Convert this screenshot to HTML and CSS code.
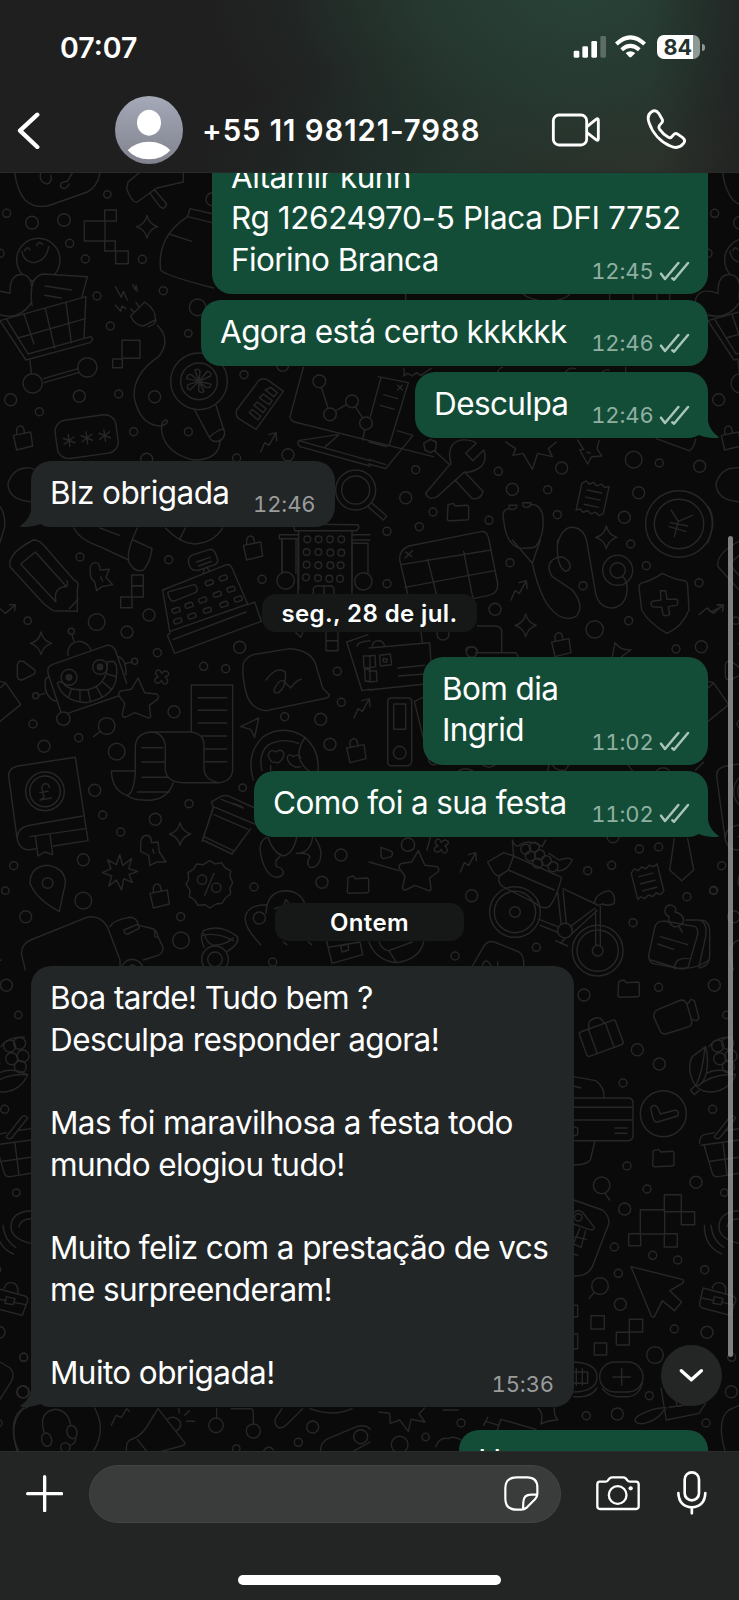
FILE: index.html
```html
<!DOCTYPE html>
<html lang="pt-BR">
<head>
<meta charset="utf-8">
<title>+55 11 98121-7988</title>
<link rel="stylesheet" href="styles.css">
</head>
<body>
<div class="phone">
  <header class="header">
    <div class="status">
      <span class="clock">07:07</span>
      <div class="status-icons">
        <svg class="i-signal" viewBox="97 45 101 72"><g fill="#fff"><rect x="99" y="92" width="17" height="21" rx="4"/><rect x="125" y="79" width="17" height="34" rx="4"/><rect x="152" y="63" width="17" height="50" rx="4"/><rect x="179" y="48" width="17" height="65" rx="4" opacity=".25"/></g></svg>
        <svg class="i-wifi" viewBox="226 45 94 72"><g fill="none" stroke="#fff" stroke-width="12"><path d="M230 72Q272 32 315 72"/><path d="M246 89Q272 66 299 89"/></g><path d="M258 99Q272 88 287 99L276 110Q272 114 268 110Z" fill="#fff"/></svg>
        <div class="battery"><span>84</span></div>
      </div>
    </div>
    <div class="nav">
      <svg class="i-back" viewBox="50 276 70 112"><path d="M111 284L59 332L111 381" fill="none" stroke="#fff" stroke-width="13" stroke-linecap="round" stroke-linejoin="round"/></svg>
      <svg class="avatar" viewBox="0 0 204 204"><defs><linearGradient id="av" x1="0" y1="0" x2="0" y2="1"><stop offset="0" stop-color="#a5a9b8"/><stop offset="1" stop-color="#80838d"/></linearGradient></defs><circle cx="102" cy="102" r="102" fill="url(#av)"/><ellipse cx="102" cy="80" rx="36" ry="39" fill="#fff"/><path d="M38 163Q62 137 102 137Q142 137 166 163Q142 190 102 190Q62 190 38 163Z" fill="#fff"/></svg>
      <h1 class="title">+55 11 98121-7988</h1>
      <svg class="i-video" viewBox="34 277 150 102"><g fill="none" stroke="#fff" stroke-width="8.5" stroke-linejoin="round"><rect x="41" y="283" width="100" height="90" rx="17"/><path d="M142 318L169 296Q176 291 176 299V354Q176 362 169 357L142 336"/></g></svg>
      <svg class="i-phone" viewBox="320 266 122 122"><path d="M336 275C345 269 353 272 358 279L368 296C372 303 369 307 364 311C358 316 357 321 361 327C368 337 378 346 387 351C393 354 397 351 401 345C405 339 410 338 416 342L430 352C437 358 437 364 432 370C423 381 408 384 393 377C363 364 339 337 329 307C324 292 327 281 336 275Z" fill="none" stroke="#fff" stroke-width="8.5" stroke-linejoin="round"/></svg>
    </div>
  </header>

  <main class="chat">
    <svg class="wallpaper" viewBox="0 173 739 1278">
      <defs>
        <symbol id="lock" viewBox="0 0 70 80" overflow="visible"><path d="M6 30L58 20L64 62L16 74ZM16 27V12Q22 -4 36 6L40 23"/></symbol>
        <path id="spark" d="M0 -34Q6 -8 32 0Q8 6 0 34Q-6 8 -32 0Q-6 -6 0 -34Z"/>
        <path id="arrow" d="M0 60L12 32L25 40L45 4M24 8L46 2L48 26"/>
        <path id="burst" d="M0 -52L9 -20L36 -40L27 -10L54 -2L28 8L38 32L12 20L6 54L-10 24L-32 42L-24 12L-52 2L-26 -10L-36 -36L-10 -22Z"/>
        <path id="star" d="M4 -60L24 -16L60 -12Q70 -6 62 4L38 22L42 56Q38 64 26 56L-6 44L-34 58Q-46 58 -42 44L-36 16L-54 -8Q-54 -22 -42 -22L-16 -26Z"/>
        <path id="clover" d="M0 -10Q10 -24 20 -14Q24 -4 10 0Q24 10 14 20Q4 24 0 10Q-10 24 -20 14Q-24 4 -10 0Q-24 -10 -14 -20Q-4 -24 0 -10Z"/>
        <g id="receipt"><path d="M-42 -36L-30 -46L-20 -38L-8 -46L4 -38L16 -46L28 -38L40 -44L40 40L28 48L16 40L4 48L-8 40L-20 48L-32 40L-42 46ZM-22 -20H22M-22 2H22M-22 24H22"/></g>
        <path id="folder" d="M-30 -22L-14 -26L-8 -18L26 -20Q32 -20 32 -14V18Q32 24 26 24L-26 26Q-32 26 -32 20Z"/>

        <g id="wa">
          <path d="M42 0Q42 80 75 120Q110 152 160 132L262 96Q302 76 302 10M122 40Q116 66 140 72Q158 68 152 46M208 72Q196 94 182 80Q178 66 202 64L222 30"/>
          <path d="M384 66L440 20L550 -10V66L470 84L412 126Q396 130 380 86ZM450 100L480 140Q494 152 500 132L462 88"/>
          <rect x="314" y="150" width="35" height="33"/><rect x="253" y="183" width="62" height="60"/><rect x="314" y="243" width="32" height="30"/><rect x="347" y="273" width="38" height="38"/>
          <use href="#spark" x="441" y="200"/>
          <path d="M640 162L570 146L563 170L636 188M563 170Q470 230 482 330Q490 345 640 384M508 222L575 244"/>
          <circle cx="115" cy="300" r="65"/><path d="M66 274Q70 306 104 308Q140 300 146 260M74 272Q82 256 90 270M110 256Q118 240 128 254"/>
          <path fill="#0a0a0a" d="M-40 440Q-40 376 30 400Q28 340 70 344Q100 350 94 400M0 465Q60 480 92 430M96 436Q84 350 130 342L262 350L246 412M135 378L214 390M134 406L184 414"/>
          <path d="M0 482L258 410L252 532M0 482L78 600L270 548Q284 538 272 530L84 582L20 478M54 534L256 476M72 462L102 552M136 446L164 564M198 428L214 548M90 602L94 640M130 656L234 626M132 668L236 638"/><circle cx="98" cy="670" r="29"/><circle cx="262" cy="622" r="29"/>
          <path d="M346 380L364 412L370 394L382 420M398 374L406 390L408 376L412 394M346 436L362 454L366 438L378 446"/>
          <path d="M392 468L434 426Q470 450 466 480L430 498Q404 496 392 468ZM418 442L408 428M402 456L392 446M466 474Q474 490 446 500M472 496Q516 540 476 590Q400 640 402 710Q420 800 486 798Q510 786 500 780Q480 780 486 820Q500 880 580 900Q660 900 660 840"/>
          <rect x="366" y="541" width="54" height="54"/><rect x="338" y="597" width="29" height="26"/>
          <circle cx="597" cy="664" r="85"/><circle cx="597" cy="664" r="55"/><path d="M597 664L585 630Q596 624 600 634L597 664L622 634Q636 636 632 648L597 664L632 672Q634 686 618 682L597 664L612 694Q600 702 596 690L597 664L570 690Q558 684 564 674L597 664L560 656Q562 640 574 644ZM584 750L628 832Q640 852 664 840Q680 824 670 806L648 736M628 832Q648 812 672 806"/>
          <path d="M710 750L776 662Q790 650 806 662L850 694L768 808L716 776Q706 768 710 750ZM796 690L822 710L832 698L812 682ZM778 714L808 734L816 722L790 702ZM762 736L790 758L798 746L772 726ZM748 758L774 780L782 768L756 748Z"/>
          <use href="#arrow" x="782" y="816"/>
          <path d="M910 622L870 770Q872 782 884 786L1300 890M958 664L990 762L1056 724L1098 790L1088 840M1015 826L976 860M896 842L1110 902M900 860Q890 850 896 842L1012 824M900 860L1110 918"/><circle cx="958" cy="664" r="19" fill="#0a0a0a"/><circle cx="990" cy="763" r="19" fill="#0a0a0a"/><circle cx="1056" cy="724" r="19" fill="#0a0a0a"/><circle cx="1098" cy="790" r="19" fill="#0a0a0a"/>
          <g transform="rotate(-8 260 830)"><rect x="168" y="772" width="184" height="116" rx="34"/><path d="M206 816V852M190 825L222 843M222 825L190 843M260 816V852M244 825L276 843M276 825L244 843M314 816V852M298 825L330 843M330 825L298 843"/></g>
          <use href="#lock" x="34" y="796" width="70" height="80"/>
          <path d="M92 1025Q24 1020 24 970Q40 924 80 924Q92 920 104 930M0 1040Q16 1060 14 1100L0 1148"/>
          <circle cx="1067" cy="990" r="60"/><circle cx="1067" cy="990" r="42"/><path d="M1104 1040L1150 1080L1160 1068L1114 1028"/>
          <path d="M222 1104Q240 1140 300 1160L386 1200Q380 1170 412 1104M300 1104L358 1126M400 1140L456 1166Q450 1210 430 1230Q400 1240 384 1200M496 1104Q540 1150 582 1152Q640 1150 668 1104M556 1104L540 1136"/>
          <path d="M880 1092L884 1112H1070Q1080 1104 1074 1094L890 1092M896 1116V1290M1056 1116V1290M838 1124H896M838 1124V1136H896M1056 1124H1110M1056 1140H1110M846 1136V1240M888 1136V1240"/>
          <g><circle cx="20" cy="160" r="12"/><circle cx="96" cy="188" r="19"/><circle cx="192" cy="180" r="19"/><circle cx="322" cy="103" r="11"/><circle cx="209" cy="250" r="12"/><circle cx="256" cy="297" r="12"/><circle cx="427" cy="298" r="12"/><circle cx="490" cy="392" r="12"/><circle cx="291" cy="408" r="12"/><circle cx="331" cy="498" r="12"/><circle cx="593" cy="442" r="25"/><circle cx="565" cy="520" r="11"/><circle cx="638" cy="118" r="20"/><circle cx="32" cy="719" r="18"/><circle cx="118" cy="755" r="12"/><circle cx="238" cy="709" r="18"/><circle cx="356" cy="702" r="12"/><circle cx="464" cy="710" r="18"/><circle cx="401" cy="815" r="12"/><circle cx="565" cy="815" r="12"/><circle cx="440" cy="898" r="18"/><circle cx="732" cy="644" r="12"/><circle cx="864" cy="884" r="18"/><circle cx="710" cy="894" r="12"/><circle cx="848" cy="616" r="18"/><circle cx="0" cy="280" r="12"/></g>
        </g>

        <g id="wb">
          <path d="M28 650L118 668L62 852Q58 862 46 858L0 846M36 652L4 770M44 704L86 716M34 736L76 748M86 676L100 690M100 676L86 690M84 812L132 826L50 926L0 912M0 898L50 914"/>
          <path d="M104 626Q108 644 104 648L116 640L130 648L142 638L156 646L170 636L186 626M110 400V420M460 400Q480 420 530 425Q590 420 604 400M722 404V420M792 404V420M864 404V420M902 404V420M386 636Q390 624 400 622M590 636Q600 620 620 626M700 636Q710 626 720 630M770 622V636"/>
          <path d="M164 850L184 838L202 846L200 870L184 878L168 870ZM198 874L242 914M246 912Q230 850 276 840Q310 838 322 850L290 880L312 902L344 870Q356 900 336 920Q310 940 286 936L204 1010Q180 1024 170 1000L242 914M258 960L310 1016Q336 1020 342 994L290 940"/>
          <path d="M410 846L440 866L432 886L462 880L490 928L506 880L550 890L538 866L562 846M626 840L644 868L632 870L656 912L668 890L698 888L684 866L690 842M654 876L664 880M862 836L960 872Q972 870 980 838"/>
          <use href="#receipt" transform="translate(672 1014) rotate(12)"/>
          <use href="#folder" x="267" y="1056"/>
          <circle cx="930" cy="1092" r="100"/><circle cx="930" cy="1092" r="74"/><path d="M906 1050L928 1084L970 1066M928 1084L916 1130M904 1088L956 1098M900 1100L950 1114"/>
          <use href="#spark" x="712" y="1132"/>
          <path d="M420 1046Q396 1050 404 1080Q410 1150 450 1164Q490 1166 500 1160Q530 1120 520 1060Q508 1030 486 1034M420 1036L444 1036Q444 1046 432 1048Q418 1050 420 1036ZM462 1028L486 1028Q486 1040 474 1042Q460 1044 462 1028ZM566 1150Q580 1102 610 1102Q650 1104 656 1160L680 1300Q690 1344 732 1344Q772 1336 774 1290Q776 1260 760 1250"/>
          <g><circle cx="140" cy="929" r="12"/><circle cx="388" cy="934" r="12"/><circle cx="578" cy="924" r="18"/><circle cx="430" cy="988" r="18"/><circle cx="536" cy="989" r="12"/><circle cx="794" cy="899" r="25"/><circle cx="871" cy="909" r="12"/><circle cx="992" cy="919" r="18"/><circle cx="809" cy="998" r="18"/><circle cx="766" cy="1072" r="18"/><circle cx="565" cy="1064" r="12"/><circle cx="192" cy="1056" r="12"/><circle cx="110" cy="1013" r="18"/><circle cx="54" cy="1114" r="12"/><circle cx="151" cy="1100" r="12"/><circle cx="360" cy="1081" r="12"/></g>
        </g>

        <g id="wc">
          <path d="M30 80Q22 40 100 0Q116 0 130 14L222 120Q240 124 232 150V214L160 212Q140 200 130 190L30 80ZM62 72L168 186M106 36L200 140M62 72L106 36M168 186Q160 150 186 142Q210 140 200 122M208 206L234 178"/>
          <path d="M270 90Q270 72 284 68Q300 66 300 90L328 88L318 112L338 134L306 140L290 152L284 126L272 112ZM302 110L308 124"/>
          <rect x="395" y="105" width="35" height="32"/><rect x="395" y="137" width="35" height="34"/><rect x="362" y="171" width="34" height="32"/>
          <path d="M0 206L16 220L44 196M28 194L46 194L44 212"/>
          <path d="M488 150L680 74Q690 72 696 84L744 194L764 186L784 244L524 340L502 286L510 280L488 150ZM510 274L744 192M520 298L738 216M566 70Q562 50 580 44L630 28Q642 28 648 44L654 62Q650 74 638 76L598 90Q572 96 566 70ZM590 66L630 52M596 78L634 64M612 88L610 98M620 82L628 92M504 162Q502 156 510 154L582 134Q590 134 592 150Q590 158 580 160L520 184Q510 184 504 162Z"/>
          <g><rect x="-12" y="-7" width="24" height="14" rx="6" transform="translate(528 211) rotate(-18)"/><rect x="-12" y="-7" width="24" height="14" rx="6" transform="translate(567 196) rotate(-18)"/><rect x="-12" y="-7" width="24" height="14" rx="6" transform="translate(608 180) rotate(-18)"/><rect x="-12" y="-7" width="24" height="14" rx="6" transform="translate(652 163) rotate(-18)"/><rect x="-12" y="-7" width="24" height="14" rx="6" transform="translate(693 148) rotate(-18)"/><rect x="-12" y="-7" width="24" height="14" rx="6" transform="translate(533 243) rotate(-18)"/><rect x="-12" y="-7" width="24" height="14" rx="6" transform="translate(576 228) rotate(-18)"/><rect x="-12" y="-7" width="24" height="14" rx="6" transform="translate(622 211) rotate(-18)"/><rect x="-12" y="-7" width="24" height="14" rx="6" transform="translate(672 193) rotate(-18)"/><rect x="-12" y="-7" width="24" height="14" rx="6" transform="translate(715 177) rotate(-18)"/><rect x="-12" y="-7" width="24" height="14" rx="6" transform="translate(628 128) rotate(-18)"/><rect x="-12" y="-7" width="24" height="14" rx="6" transform="translate(670 114) rotate(-18)"/></g>
          <use href="#lock" x="724" y="-14" width="70" height="80"/>
          <circle cx="857" cy="122" r="26"/><circle cx="1090" cy="124" r="26"/><path d="M846 0V98M894 0V162M1056 0V162M1104 10V100M1056 10H1104M940 162V146Q944 138 952 138H996L1002 146V162M972 138V162"/>
          <g><circle cx="922" cy="-2" r="10"/><circle cx="956" cy="-2" r="10"/><circle cx="990" cy="-2" r="10"/><circle cx="1024" cy="-2" r="10"/><circle cx="920" cy="36" r="10"/><circle cx="955" cy="36" r="10"/><circle cx="991" cy="38" r="10"/><circle cx="1024" cy="38" r="10"/><circle cx="920" cy="74" r="10"/><circle cx="955" cy="76" r="10"/><circle cx="991" cy="76" r="10"/><circle cx="1022" cy="76" r="10"/><circle cx="918" cy="112" r="10"/><circle cx="954" cy="114" r="10"/><circle cx="988" cy="116" r="10"/><circle cx="1020" cy="116" r="10"/></g>
          <use href="#spark" x="123" y="310"/>
          <path d="M52 376Q54 360 70 364L102 388Q110 396 100 404L66 420Q54 420 52 410Z"/>
          <path d="M204 346Q200 310 236 304Q262 306 272 328M144 400Q140 380 156 374L320 316Q336 314 346 330L380 430M144 400L184 520L192 524L372 462M172 430Q190 486 260 488Q350 470 350 400Q352 370 340 364L322 366Q324 440 256 450Q204 450 192 432Q176 420 172 430ZM206 470L214 448M240 486V452M272 486L264 450M306 470L290 442M332 446L308 426M348 410L322 402M136 420Q140 410 146 412M136 420Q130 470 168 484M134 460L116 466M356 350Q380 360 378 404M378 370L396 366M222 304L216 284"/><circle cx="207" cy="412" r="24"/><circle cx="207" cy="412" r="8" fill="#242424"/><circle cx="300" cy="381" r="22"/><circle cx="300" cy="381" r="8" fill="#242424"/><circle cx="214" cy="274" r="9"/><circle cx="404" cy="364" r="9"/><circle cx="107" cy="467" r="9"/><circle cx="190" cy="536" r="20" fill="#0a0a0a"/>
          <use href="#star" x="410" y="474" fill="#0a0a0a"/><use href="#clover" x="485" y="411"/>
          <path d="M0 424L16 428L62 494L0 544M0 444L16 430"/>
          <circle cx="320" cy="558" r="25"/><path d="M302 574L280 590"/>
          <path d="M574 576V435H698V690Q694 726 654 728H550Q500 726 496 690V616Q490 578 452 576Q408 580 406 620V700Q400 764 380 766Q336 750 334 693H404M452 576H572Q612 580 612 616V690Q616 720 654 728M380 766Q400 780 430 780Q500 786 520 728M594 473H680M594 511H680M594 549H680M606 588H680M612 627H680M612 665H680M426 623H488M426 666H492M426 712H502M412 756H508"/>
          <path d="M730 370Q740 350 760 344L870 326Q930 330 946 370L968 444L988 464Q988 470 980 474L800 512Q760 510 742 470Q724 410 730 370ZM798 420Q830 376 856 396Q860 440 836 458Q820 462 822 450Q834 420 850 422Q862 434 872 444Q890 420 904 418M888 278L902 292L908 278"/>
          <path d="M722 560L776 534L764 592L752 568Z"/>
          <path d="M978 278V332H1014V278M978 302H1014M1040 306L1104 284M1040 306L1086 452L1110 448M1072 318Q1070 306 1110 302M1090 348H1110V384H1092ZM1094 388H1110V424H1096Z"/>
          <path d="M760 720Q736 640 790 590Q850 552 912 590Q960 630 954 692M786 692Q774 640 806 614Q850 592 896 610M914 594Q890 630 900 660Q916 690 928 692M806 640Q812 626 828 636Q842 624 852 640Q852 656 836 668L816 666Q802 650 806 640ZM862 650Q870 640 880 650Q894 640 902 652M862 650Q860 670 888 682L902 680M812 676V692"/>
          <use href="#lock" x="1034" y="594" width="70" height="80"/><use href="#arrow" x="1062" y="474"/>
          <path d="M26 710Q24 684 54 678L226 652L264 902L160 918M108 926L86 930Q60 928 52 900L26 710M52 900Q50 862 90 856L248 828M90 890L256 866M106 888L114 948L134 936L158 944L150 884"/><circle cx="135" cy="754" r="58"/><circle cx="135" cy="754" r="46"/><path d="M148 742Q146 728 132 732Q122 738 128 754L132 772L120 780L154 774M120 758L144 754"/>
          <path d="M634 786L666 768Q676 764 690 770L764 804M634 786L640 800L764 852M640 800L608 900L696 942L752 866M642 824L744 868M612 890L700 932M664 778L730 804M606 904L640 804M700 790L726 800"/>
          <use href="#spark" x="540" y="882"/><path d="M422 908Q424 888 440 886Q456 888 454 908L474 906L478 936L498 966L470 966L450 976L446 946L422 934ZM458 928L462 940"/>
          <use href="#burst" x="359" y="996"/>
          <path d="M178 1114Q110 1080 90 1030Q90 980 142 976Q196 984 196 1030Z"/><circle cx="143" cy="1029" r="16"/>
          <use href="#lock" x="444" y="1030" width="70" height="80"/>
          <path d="M628 962L646 972L664 968L676 984L692 992L690 1010L698 1028L690 1044L692 1062L676 1074L666 1090L648 1092L630 1104L614 1094L594 1096L584 1080L568 1070L570 1050L558 1034L566 1018L564 998L580 988L590 972L610 974ZM642 1000L614 1066"/><circle cx="606" cy="1019" r="14"/><circle cx="649" cy="1043" r="14"/>
          <path d="M780 930Q780 900 800 892M780 930Q790 1000 826 1012Q850 1012 850 996Q848 984 830 980Q820 964 840 950M804 892Q820 940 850 948Q880 940 890 892M890 940Q930 940 938 892M946 896Q970 930 960 960Q950 986 930 982Q916 970 930 950Q924 938 900 940"/>
          <path d="M782 1214Q730 1160 736 1130Q744 1094 800 1094M860 1214L850 1206M935 1214L925 1206M798 1120Q800 1052 860 1052Q900 1054 914 1090M824 1106L850 1098L858 1078L868 1092M980 1204L996 1270L1088 1244L1080 1206M986 1222L1080 1206M1022 1218L1044 1212L1046 1230L1026 1236Z"/><circle cx="778" cy="1134" r="18"/><use href="#folder" x="1074" y="1034"/>
          <path d="M64 1240Q66 1210 92 1200L260 1132Q300 1124 322 1160L360 1260V1290M64 1240L76 1290M330 1160Q340 1140 390 1132Q410 1132 416 1156L450 1164Q470 1166 474 1190L490 1224Q488 1240 474 1246L430 1260M372 1170L410 1154Q420 1156 416 1166L384 1182Q372 1184 372 1170ZM362 1290Q370 1258 398 1258Q426 1262 430 1290M384 1290Q390 1272 404 1276L412 1290M464 1174V1190L474 1192"/>
          <path d="M612 1222Q598 1190 610 1172Q660 1150 712 1190Q720 1210 682 1234M612 1180Q620 1210 640 1216Q680 1214 700 1194M610 1186Q650 1176 700 1202"/><circle cx="645" cy="1258" r="40"/><circle cx="645" cy="1258" r="22"/>
          <g><circle cx="240" cy="51" r="12"/><circle cx="506" cy="59" r="12"/><circle cx="786" cy="118" r="12"/><circle cx="83" cy="242" r="11"/><circle cx="290" cy="246" r="25"/><circle cx="447" cy="225" r="18"/><circle cx="381" cy="276" r="18"/><circle cx="472" cy="338" r="12"/><circle cx="611" cy="379" r="12"/><circle cx="677" cy="386" r="12"/><circle cx="719" cy="322" r="18"/><circle cx="522" cy="515" r="18"/><circle cx="1012" cy="394" r="12"/><circle cx="1024" cy="487" r="12"/><circle cx="854" cy="530" r="12"/><circle cx="962" cy="538" r="18"/><circle cx="990" cy="613" r="18"/><circle cx="99" cy="552" r="12"/><circle cx="236" cy="593" r="12"/><circle cx="132" cy="619" r="18"/><circle cx="350" cy="635" r="25"/><circle cx="284" cy="751" r="18"/><circle cx="308" cy="825" r="12"/><circle cx="466" cy="838" r="18"/><circle cx="567" cy="791" r="12"/><circle cx="728" cy="743" r="11"/><circle cx="362" cy="876" r="12"/><circle cx="250" cy="959" r="18"/><circle cx="41" cy="977" r="12"/><circle cx="16" cy="1052" r="11"/><circle cx="250" cy="1082" r="25"/><circle cx="77" cy="1130" r="18"/><circle cx="542" cy="1130" r="12"/><circle cx="543" cy="1201" r="25"/><circle cx="762" cy="1041" r="12"/><circle cx="966" cy="1027" r="18"/><circle cx="1023" cy="945" r="18"/><circle cx="818" cy="1266" r="12"/></g>
        </g>

        <g id="wd">
          <path d="M116 162L92 60Q90 30 120 18L340 -26Q356 -24 360 0L386 130Q388 160 360 166L312 176M96 74L366 30M108 142L376 92M176 58L202 162M284 34L312 176M110 36L128 50M130 32L108 54"/>
          <use href="#arrow" x="426" y="120"/><use href="#spark" x="470" y="256"/>
          <path d="M430 0L490 70L514 0M490 70Q510 160 540 200Q580 250 620 230Q650 200 610 150L550 110Q530 80 550 60Q580 40 600 66Q610 90 590 94Q560 80 566 0"/>
          <circle cx="746" cy="91" r="45"/><circle cx="746" cy="91" r="23"/>
          <path d="M880 100Q920 120 946 122Q956 124 956 140L960 210Q940 260 894 280Q840 250 818 210L810 142Q810 130 822 128Q850 120 880 100ZM874 152H890L894 178L924 178Q930 190 922 196L898 200L902 224Q890 230 882 224L878 202L850 200Q842 190 850 184L876 180Z"/>
          <path d="M990 224L1014 204L1026 216L1062 198M1046 196L1064 196L1060 214"/>
          <use href="#lock" x="542" y="276" width="70" height="80"/>
          <path d="M730 350L738 308Q754 332 786 330L758 350M156 278L160 308M0 324L182 308L190 430L0 450M86 384L166 376M88 408L166 402M10 318Q10 302 30 302Q44 304 46 316M32 346L64 342L68 374L34 378ZM0 348L18 346L20 380L0 384M0 394L22 392L24 424L0 426M42 356H54V366H44ZM326 258H380Q398 260 398 274V336M320 338H440L448 350M290 330Q292 320 306 320Q320 320 326 332"/>
          <path d="M64 474H120Q128 476 128 484V664Q126 676 118 677H66Q56 676 56 666V484Q56 476 64 474ZM74 492H110V568H74ZM136 484L162 472M136 484L180 664Q184 676 200 674"/><circle cx="92" cy="638" r="19"/>
          <path d="M270 692Q290 680 310 692M340 673Q360 690 380 673M540 673L536 692M550 673Q560 696 590 690L600 673M776 673L790 692M862 692Q880 676 900 690M980 690L1004 666"/>
          <path d="M36 922L68 934Q74 942 66 950L44 956Q36 954 36 944ZM0 966L90 992M184 892L174 930"/><use href="#clover" x="217" y="918"/><use href="#star" x="144" y="992"/><use href="#arrow" x="274" y="936"/>
          <path d="M356 966L404 938L434 948L418 990L388 1008Q376 1008 356 966ZM434 948L578 1012Q560 1080 540 1100Q520 1110 500 1090L402 1040Q384 1030 392 1008L418 990L556 1050M430 900Q440 930 460 910Q490 900 520 920L530 900M430 900L434 948M540 940L570 960Q600 950 610 960Q590 1000 560 990"/>
          <g><circle cx="470" cy="928" r="15"/><circle cx="496" cy="922" r="15"/><circle cx="484" cy="948" r="15"/><circle cx="512" cy="944" r="15"/><circle cx="532" cy="962" r="15"/><circle cx="506" cy="970" r="15"/><circle cx="552" cy="980" r="15"/></g>
          <circle cx="438" cy="1116" r="76"/><circle cx="438" cy="1116" r="62"/><circle cx="438" cy="1116" r="16"/><circle cx="686" cy="1232" r="76"/><circle cx="686" cy="1232" r="62"/><circle cx="686" cy="1232" r="16"/><circle cx="588" cy="1172" r="22"/><path d="M510 1138L566 1160M514 1156L564 1176M566 1056L576 1150M582 1052L592 1150M582 1046L680 1092M678 1104L604 1160M610 1180L684 1112M680 1216V1110M694 1216V1100M676 1090Q680 1060 720 1052Q740 1060 736 1090Q720 1100 700 1092Q686 1100 676 1090ZM588 1196L574 1210M560 1202L596 1218"/>
          <path d="M310 1278L344 1220Q356 1200 376 1206L450 1236Q466 1246 464 1278M340 1276Q350 1250 366 1276M386 1266V1276M0 1206Q20 1260 80 1268Q150 1260 164 1206M30 1206Q40 1230 60 1232L130 1206M60 1232L80 1264"/>
          <use href="#receipt" transform="translate(836 1024) rotate(-14)"/>
          <path d="M916 896L902 990L938 1022L974 990L956 896"/>
          <path d="M858 1160Q864 1140 890 1144L980 1160Q990 1170 984 1190L958 1280Q950 1290 930 1286L850 1270Q836 1260 840 1240ZM950 1140H990Q1016 1146 1010 1190L990 1280M1000 1140Q1024 1146 1022 1180V1250Q1020 1280 990 1284M874 1190L956 1214M866 1212L914 1228M916 1286Q918 1250 960 1256M888 1110Q890 1092 910 1096Q926 1104 918 1116Q940 1120 944 1140Q940 1162 914 1160Q896 1150 900 1130Q886 1124 888 1110ZM930 1160L940 1176"/>
          <g><circle cx="54" cy="131" r="12"/><circle cx="423" cy="68" r="12"/><circle cx="642" cy="137" r="12"/><circle cx="832" cy="77" r="12"/><circle cx="785" cy="12" r="12"/><circle cx="990" cy="128" r="12"/><circle cx="378" cy="208" r="18"/><circle cx="677" cy="268" r="26"/><circle cx="779" cy="242" r="12"/><circle cx="921" cy="327" r="12"/><circle cx="997" cy="320" r="18"/><circle cx="308" cy="336" r="16"/><circle cx="222" cy="282" r="18"/><circle cx="117" cy="914" r="20"/><circle cx="308" cy="1067" r="18"/><circle cx="656" cy="992" r="12"/><circle cx="728" cy="976" r="12"/><circle cx="811" cy="927" r="12"/><circle cx="869" cy="921" r="12"/><circle cx="732" cy="890" r="18"/><circle cx="1034" cy="1051" r="12"/><circle cx="954" cy="1070" r="12"/><circle cx="792" cy="1148" r="12"/><circle cx="502" cy="1222" r="12"/><circle cx="258" cy="1248" r="12"/></g>
        </g>

        <g id="we">
          <path d="M845 0L924 24Q980 30 1020 0"/>
          <use href="#folder" x="779" y="86"/><use href="#folder" x="883" y="594"/>
          <g transform="rotate(-20 695 230)"><rect x="637" y="196" width="116" height="78" rx="8"/><path d="M668 196V274M722 196V274M672 196Q670 172 695 172Q718 172 718 196"/></g>
          <path d="M854 170Q854 154 868 148L936 120Q950 120 954 134L968 180Q970 196 960 200L890 222Q876 222 872 210ZM954 134L966 118L976 122L990 174L984 182L966 178"/>
          <path d="M980 378Q950 330 970 290L1010 260Q1020 300 1012 340Q1000 380 980 378ZM1012 340Q1050 320 1100 344Q1080 390 1030 396Q1000 396 988 384M980 376L964 390L976 404L990 392M980 378Q1000 340 1008 262M984 380Q1030 340 1098 344M1020 260Q1040 230 1090 232"/>
          <g><circle cx="1046" cy="258" r="18"/><circle cx="1076" cy="250" r="18"/><circle cx="1052" cy="296" r="18"/><circle cx="1086" cy="288" r="18"/><circle cx="1078" cy="320" r="18"/></g>
          <path d="M614 350L680 362Q706 380 706 414M614 378L636 384M614 414H780Q792 416 792 428V530Q790 540 780 542H614M614 442H792M614 480H792M738 504H774M738 520H774M614 500L626 504V524L614 528M678 542L664 600Q650 616 614 614"/>
          <circle cx="883" cy="461" r="69"/><path d="M848 440Q858 432 866 442L874 462L920 450Q932 454 926 468L866 486Q856 488 852 474L846 452Q844 444 848 440Z"/>
          <path d="M992 550Q990 530 1006 524L1036 518M1070 512L1110 506M996 556L1110 540M1006 558L1030 640Q1034 652 1048 650L1110 640M1024 604L1110 592M1062 550L1074 646M1036 530L1080 474Q1090 460 1100 474L1052 534Q1040 540 1036 530Z"/>
          <circle cx="698" cy="676" r="25"/><path d="M708 700L722 720"/><circle cx="693" cy="978" r="25"/><path d="M676 996L660 1016"/>
          <rect x="886" y="704" width="51" height="51"/><rect x="937" y="755" width="40" height="39"/><rect x="814" y="749" width="73" height="73"/><rect x="779" y="821" width="36" height="36"/><rect x="886" y="821" width="39" height="40"/>
          <path d="M614 720L700 750Q720 764 720 790L670 920Q656 950 614 948M614 760Q624 746 640 756L676 802Q676 812 660 808L614 792M632 806L614 850M650 812L636 862L614 852M614 830L652 838M614 882L626 886"/><circle cx="628" cy="772" r="11"/>
          <path d="M1006 796Q1006 860 1058 882M1026 796Q1030 840 1064 862M1050 800Q1050 756 1110 752M1050 800Q1050 836 1110 850M1074 800Q1080 776 1110 776"/>
          <path d="M786 920L940 958Q948 964 940 970L902 992L938 1026L916 1052L880 1022L856 1070Q850 1074 846 1066Z"/>
          <path d="M1002 984L1092 1008Q1102 1012 1100 1022L1084 1066L1000 1044Q990 1040 992 1030ZM1000 1014L1034 1022M1062 1028L1094 1034M1036 1010L1062 1016L1056 1034L1032 1030ZM1030 984Q1036 962 1060 970Q1074 980 1070 1000"/>
          <rect x="666" y="1067" width="40" height="40"/><rect x="781" y="1078" width="40" height="38"/><rect x="742" y="1117" width="39" height="38"/><rect x="676" y="1149" width="37" height="36"/><path d="M614 1036H626V1070H614M614 1122H626V1166H614"/>
          <rect x="692" y="1206" width="130" height="90" rx="45"/><path d="M614 1206Q684 1210 684 1250Q684 1294 614 1296M622 1226V1276M640 1226V1276M614 1236H656V1270H614M732 1251H784M758 1226V1276M614 1310H640Q670 1306 684 1284M700 1286Q720 1312 750 1310H780Q810 1306 820 1270"/>
          <path d="M876 1284L892 1380L990 1360L1010 1330M892 1344Q860 1340 810 1366Q794 1376 800 1386Q820 1400 860 1376Q880 1362 888 1344M900 1342L970 1332"/>
          <path d="M30 1356L62 1360L64 1390L92 1380L118 1414L126 1378L168 1386L150 1362L166 1344M508 1346Q524 1360 516 1392Q540 1380 566 1380Q554 1364 556 1344M344 1396L356 1372M350 1384L390 1396M384 1412L396 1378L500 1408M1070 1480Q1040 1380 1080 1350L1110 1336M222 1350H268M200 1460Q212 1430 238 1436Q254 1426 276 1440"/>
          <g><circle cx="645" cy="105" r="18"/><circle cx="869" cy="82" r="12"/><circle cx="1036" cy="76" r="18"/><circle cx="1072" cy="165" r="11"/><circle cx="805" cy="269" r="18"/><circle cx="871" cy="312" r="18"/><circle cx="762" cy="369" r="12"/><circle cx="1031" cy="448" r="12"/><circle cx="774" cy="618" r="12"/><circle cx="834" cy="687" r="12"/><circle cx="981" cy="667" r="18"/><circle cx="767" cy="747" r="18"/><circle cx="1066" cy="698" r="11"/><circle cx="736" cy="861" r="12"/><circle cx="851" cy="886" r="12"/><circle cx="926" cy="900" r="12"/><circle cx="1007" cy="929" r="12"/><circle cx="748" cy="940" r="12"/><circle cx="754" cy="1033" r="18"/><circle cx="916" cy="1107" r="12"/><circle cx="1014" cy="1117" r="18"/><circle cx="858" cy="1185" r="25"/><circle cx="1088" cy="1192" r="12"/><circle cx="841" cy="1307" r="12"/><circle cx="1087" cy="1295" r="18"/><circle cx="745" cy="1362" r="18"/><circle cx="652" cy="1367" r="12"/><circle cx="1011" cy="1389" r="12"/><circle cx="276" cy="1389" r="12"/><circle cx="170" cy="1431" r="11"/><circle cx="92" cy="1454" r="25"/><circle cx="932" cy="1328" r="10"/></g>
        </g>

        <g id="wf">
          <path d="M0 66L30 84Q46 100 34 124L0 178M56 334Q20 260 70 204M284 204Q320 270 280 334M132 276Q114 216 166 208Q206 212 212 258M228 296Q224 316 208 316M334 256L348 226L364 232L380 206L388 214M474 206L438 264Q420 290 390 300Q376 310 380 334M474 206L554 308Q556 316 544 318L484 334M412 298L440 334M500 240Q520 222 540 244Q546 262 530 272M536 206L538 218M554 226L568 212M560 244H584M650 206V236M694 206H754Q760 208 760 220V252M846 206L826 236Q822 256 838 264Q850 264 858 256L908 206M930 206Q1000 232 1056 206M962 334Q960 308 984 296L1070 260Q1100 252 1110 268M1060 334L1110 306M790 334Q806 310 820 330"/>
          <ellipse cx="140" cy="299" rx="15" ry="20" transform="rotate(-14 140 299)"/><ellipse cx="216" cy="276" rx="15" ry="20" transform="rotate(-14 216 276)"/><circle cx="196" cy="322" r="14"/><circle cx="648" cy="256" r="22"/><circle cx="760" cy="273" r="21"/><circle cx="938" cy="261" r="18"/><circle cx="1082" cy="290" r="21"/><circle cx="895" cy="307" r="12"/><circle cx="709" cy="326" r="11"/><circle cx="68" cy="156" r="18"/><circle cx="71" cy="52" r="12"/>
        </g>
      </defs>
      <g fill="none" stroke="#272727" stroke-width="4.300" stroke-linejoin="round" stroke-linecap="round">
        <use href="#wa" transform="translate(0 160) scale(.33333)"/>
        <use href="#wa" transform="translate(708 160) scale(.33333)"/>
        <use href="#wb" transform="translate(369 160) scale(.33333)"/>
        <use href="#wc" transform="translate(0 540) scale(.33333)"/>
        <use href="#wc" transform="translate(708 540) scale(.33333)"/>
        <use href="#wd" transform="translate(369 540) scale(.33333)"/>
        <use href="#we" transform="translate(369 960) scale(.33333)"/>
        <use href="#we" transform="translate(-339 960) scale(.33333)"/>
        <use href="#wf" transform="translate(0 1340) scale(.33333)"/>
      </g>
      <defs>
        <symbol id="ticks" viewBox="872 298 92 62"><path d="M878 336L890 352L930 304M912 350L917 354L959 304" fill="none" stroke="#a9c4b8" stroke-width="7.500" stroke-linecap="round" stroke-linejoin="round"/></symbol>
        <symbol id="tail" viewBox="-60 -70 96 70"><path d="M-60 -30L-10 -70H-1V-58C2 -34 14 -16 34 -3Q28 0 14 -1Q-14 -3 -34 -12Z"/></symbol>
      </defs>
    </svg>

    <div class="thread">
      <div class="bubble out b1"><p>Altamir kunn<br><span class="rg">Rg 12624970-5 Placa DFI 7752</span><br>Fiorino Branca</p><div class="meta"><time>12:45</time><svg class="ticks"><use href="#ticks"/></svg></div></div>
      <div class="bubble out b2"><p>Agora está certo kkkkkk</p><div class="meta"><time>12:46</time><svg class="ticks"><use href="#ticks"/></svg></div></div>
      <div class="bubble out b3"><p>Desculpa</p><div class="meta"><time>12:46</time><svg class="ticks"><use href="#ticks"/></svg></div><svg class="tail"><use href="#tail"/></svg></div>
      <div class="bubble in b4"><p>Blz obrigada</p><div class="meta"><time>12:46</time></div><svg class="tail"><use href="#tail"/></svg></div>
      <div class="day d1">seg., 28 de jul.</div>
      <div class="bubble out b5"><p>Bom dia<br>Ingrid</p><div class="meta"><time>11:02</time><svg class="ticks"><use href="#ticks"/></svg></div></div>
      <div class="bubble out b6"><p>Como foi a sua festa</p><div class="meta"><time>11:02</time><svg class="ticks"><use href="#ticks"/></svg></div><svg class="tail"><use href="#tail"/></svg></div>
      <div class="day d2">Ontem</div>
      <div class="bubble in b7"><p>Boa tarde! Tudo bem ?<br>Desculpa responder agora!<br><br>Mas foi maravilhosa a festa todo<br>mundo elogiou tudo!<br><br>Muito feliz com a prestação de vcs<br>me surpreenderam!<br><br>Muito obrigada!</p><div class="meta"><time>15:36</time></div><svg class="tail"><use href="#tail"/></svg></div>
      <div class="bubble out b8"><p>Uau</p></div>
    </div>
    <div class="scrollbar"></div>
    <button class="to-bottom" aria-label="Ir para o fim"><svg viewBox="0 0 74 44"><path d="M7 8L37 35L67 8" fill="none" stroke="#fff" stroke-width="10" stroke-linecap="round" stroke-linejoin="round"/></svg></button>
  </main>

  <footer class="footer">
    <div class="composer">
      <svg class="i-plus" viewBox="0 0 112 112"><path d="M56 5V107M5 56H107" stroke="#fff" stroke-width="10" stroke-linecap="round"/></svg>
      <div class="field"><svg class="i-sticker" viewBox="402 227 110 110"><path d="M444 234H474Q505 234 505 264V284Q505 292 498 300L474 324Q466 331 456 331H444Q409 331 409 298V266Q409 234 444 234ZM505 286H486Q464 286 463 308L462 330" fill="none" stroke="#fff" stroke-width="6.5" stroke-linejoin="round"/></svg></div>
      <svg class="i-camera" viewBox="678 227 138 110"><g fill="none" stroke="#fff" stroke-width="7" stroke-linejoin="round"><path d="M692 247H710Q714 247 717 243L722 237Q725 234 730 234H762Q767 234 770 237L775 243Q778 247 783 247H801Q809 247 809 255V321Q809 329 801 329H693Q685 329 685 321V255Q685 247 692 247Z"/><circle cx="746" cy="287" r="26.5"/></g><circle cx="785" cy="267" r="6.5" fill="#fff"/></svg>
      <svg class="i-mic" viewBox="920 209 96 136"><g fill="none" stroke="#fff" stroke-width="8" stroke-linecap="round"><rect x="946" y="216" width="43" height="84" rx="21.5"/><path d="M927 278Q929 319 967.500 321Q1006 319 1008 278M967.500 321V339"/></g></svg>
    </div>
    <div class="home"></div>
  </footer>
</div>
</body>
</html>
```
FILE: styles.css
```css
* { box-sizing: border-box; }
body {
  margin: 0;
  background: #0a0a0a;
  color: #fff;
  font-family: Inter, "Liberation Sans", sans-serif;
}
svg { display: block; flex: none; }
.phone {
  width: 739px;
  height: 1600px;
  display: flex;
  flex-direction: column;
  overflow: hidden;
}

/* header */
.header {
  height: 173px;
  flex: none;
  background:
    linear-gradient(90deg, transparent 650px, rgba(32, 32, 32, .7) 739px),
    radial-gradient(ellipse 370px 210px at 580px -5px, rgba(41, 68, 57, .95) 0%, rgba(41, 68, 56, .65) 45%, rgba(41, 68, 56, .15) 80%, rgba(41, 68, 56, 0) 100%),
    radial-gradient(ellipse 240px 120px at 660px 160px, #2d312a 0%, rgba(45, 49, 42, 0) 100%),
    radial-gradient(ellipse 260px 120px at 460px 172px, #21322b 0%, rgba(33, 50, 43, 0) 100%),
    #1f1f1f;
  border-bottom: 1px solid #262a28;
}
.status {
  height: 94px;
  display: flex;
  align-items: center;
  justify-content: space-between;
  padding: 0 36px 0 60px;
}
.clock { font-size: 28.500px; font-weight: 600; }
.status-icons { display: flex; align-items: center; }
.i-signal { width: 33.700px; height: 24px; margin-right: 9px; }
.i-wifi { width: 31.300px; height: 24px; margin-right: 10px; }
.battery {
  position: relative;
  width: 43.500px;
  height: 24px;
  margin-right: 3px;
  border-radius: 7px;
  background: linear-gradient(90deg, #fff 36.300px, #8f9a95 36.300px);
  color: #24332d;
  font-size: 21.500px;
  font-weight: 700;
  line-height: 24px;
  padding-left: 7px;
}
.battery::after {
  content: "";
  position: absolute;
  right: -4.500px;
  top: 8.500px;
  width: 3px;
  height: 7px;
  border-radius: 0 3px 3px 0;
  background: #8f9a95;
}
.nav {
  height: 72px;
  display: flex;
  align-items: center;
  padding-left: 16.700px;
}
.i-back { width: 23.300px; height: 37.300px; margin-right: 75px; margin-top: 1px; }
.avatar { width: 68px; height: 68px; margin-right: 19px; }
.title {
  margin: 0;
  width: 349px;
  font-size: 29.300px;
  font-weight: 600;
  letter-spacing: .95px;
  white-space: nowrap;
}
.i-video { width: 50px; height: 34px; margin-right: 45.500px; margin-top: -1px; }
.i-phone { width: 40.700px; height: 40.700px; margin-top: -1px; }

/* conversation */
.chat {
  position: relative;
  flex: 1;
  overflow: hidden;
  background: #0a0a0a;
}
.wallpaper { position: absolute; inset: 0; width: 739px; height: 1278px; }
.thread {
  position: relative;
  display: flex;
  flex-direction: column;
  padding: 0 31px;
}
.bubble {
  position: relative;
  flex: none;
  display: grid;
  grid-template-columns: minmax(0, 1fr);
  padding: 10.700px 18px 13.600px 19px;
  border-radius: 20px;
  font-size: 31.500px;
  line-height: 41.700px;
  letter-spacing: -.6px;
}
.bubble p { grid-area: 1 / 1; margin: 0; white-space: nowrap; }
.rg { letter-spacing: -.38px; }
.out { align-self: flex-end; background: #144d37; fill: #144d37; }
.in { align-self: flex-start; background: #232627; fill: #232627; }
.meta {
  grid-area: 1 / 1;
  align-self: end;
  justify-self: end;
  display: flex;
  align-items: center;
  gap: 5.500px;
  height: 24px;
  margin-bottom: -2.600px;
  color: #8fb0a1;
  font-size: 22px;
  line-height: 24px;
  letter-spacing: -.1px;
  font-variant-numeric: tabular-nums;
}
.in .meta { color: #9a9c9c; margin-right: 1.500px; }
.ticks { width: 30.700px; height: 20.700px; margin-right: .200px; margin-top: -1px; }
.tail { position: absolute; right: -12px; bottom: 0; width: 32px; height: 23.300px; }
.in .tail { right: auto; left: -12px; transform: scaleX(-1); }
.b1 { width: 496px; margin-top: -28px; }
.b2 { width: 507px; margin-top: 6px; }
.b3 { width: 293px; margin-top: 6px; }
.b4 { width: 304px; margin-top: 23px; }
.b5 { width: 285px; margin-top: 25px; }
.b6 { width: 454px; margin-top: 6.600px; }
.b7 { width: 542.500px; margin-top: 25px; }
.b8 { width: 249px; margin-top: 23px; padding-top: 9.500px; }
.day {
  align-self: center;
  height: 38px;
  border-radius: 14px;
  background: #151817;
  font-size: 24px;
  font-weight: 600;
  line-height: 39px;
  letter-spacing: .4px;
  text-align: center;
}
.d1 { width: 215px; margin-top: 66.500px; }
.d2 { width: 189px; margin-top: 66px; }
.scrollbar {
  position: absolute;
  left: 727.500px;
  top: 363px;
  width: 5.500px;
  height: 821px;
  border-radius: 3px;
  background: rgba(160, 160, 160, .78);
}
.to-bottom {
  position: absolute;
  left: 661px;
  top: 1172px;
  width: 61px;
  height: 61px;
  padding: 0;
  border: 0;
  border-radius: 50%;
  background: #242626;
  display: grid;
  place-items: center;
}
.to-bottom svg { width: 24.700px; height: 14.700px; }

/* composer */
.footer {
  height: 149px;
  flex: none;
  background: #232525;
  border-top: 1px solid #2b2d2c;
  display: flex;
  flex-direction: column;
  align-items: center;
}
.composer {
  width: 100%;
  display: flex;
  align-items: center;
  padding: 13px 0 0 25.700px;
}
.i-plus { width: 37.300px; height: 37.300px; margin-right: 26px; }
.field {
  width: 472px;
  height: 57.500px;
  border: 1px solid #434444;
  border-radius: 29px;
  background: #3a3b3b;
  display: flex;
  align-items: center;
  justify-content: flex-end;
  padding-right: 20px;
  margin-right: 34px;
}
.i-sticker { width: 36.700px; height: 36.700px; }
.i-camera { width: 46px; height: 36.700px; margin-right: 34.700px; }
.i-mic { width: 32px; height: 45.300px; margin-top: -2px; }
.home { width: 263.500px; height: 10px; margin-top: 52.500px; border-radius: 5px; background: #fff; }
```
